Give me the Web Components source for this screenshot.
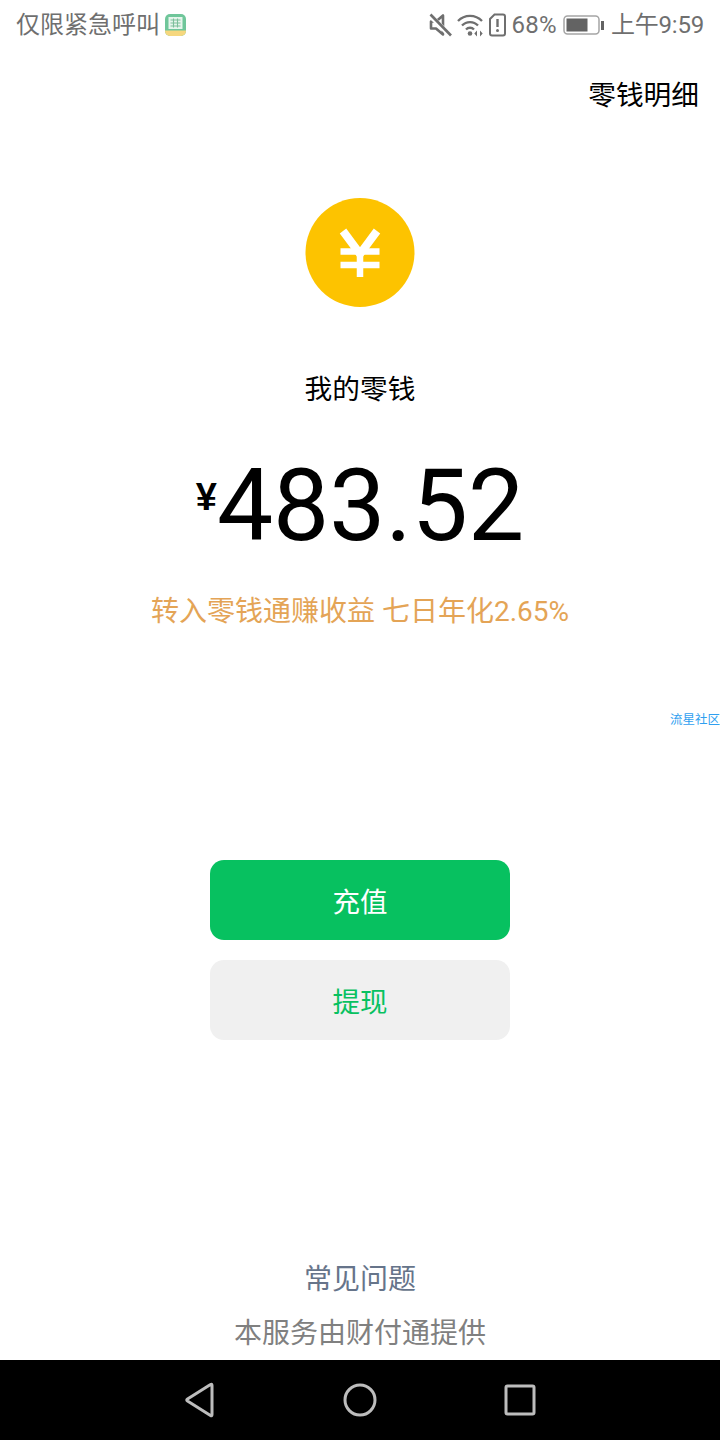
<!DOCTYPE html>
<html lang="zh"><head><meta charset="utf-8">
<style>
html,body{margin:0;padding:0;background:#fff}
body{width:720px;height:1440px;font-family:"Roboto","Noto Sans CJK SC",sans-serif}
</style></head><body>
<wallet-page>
<status-bar></status-bar>
<top-action>零钱明细</top-action>
<balance-panel></balance-panel>
<side-mark>流星社区</side-mark>
<action-button kind="primary">充值</action-button>
<action-button kind="secondary">提现</action-button>
<page-footer></page-footer>
<nav-bar></nav-bar>
</wallet-page>
<script>
const S='"Roboto","Noto Sans CJK SC",sans-serif';
function def(name,html){customElements.define(name,class extends HTMLElement{constructor(){super();this.attachShadow({mode:'open'}).innerHTML=typeof html==='function'?html(this):html;}});}
def('wallet-page',`<style>:host{display:flex;flex-direction:column;width:720px;height:1440px;overflow:hidden}</style><slot></slot>`);
def('status-bar',`<style>:host{display:flex;align-items:center;height:50px;padding:0 16px;box-sizing:border-box;color:#6f6f6f;font:24px/50px ${S}}
.l{display:flex;align-items:center;flex:1}.r{display:flex;align-items:center}
svg{display:block;flex:none}</style>
<div class="l"><span>仅限紧急呼叫</span><svg style="margin-left:5px" width="21" height="22" viewBox="0 0 21 22"><rect x="0" y="0" width="21" height="22" rx="5" fill="#6fc69a"/><rect x="3.500" y="3" width="14" height="12" fill="#e6f5ec"/><path d="M5.500 6h10M5.500 9h10M5.500 12h10M8.500 4.500v9M12.500 4.500v9" stroke="#7cbf9b" stroke-width="1.100"/><path d="M0 16.500h21v.5a5 5 0 0 1-5 5H5a5 5 0 0 1-5-5z" fill="#f6d77e"/></svg></div>
<div class="r">
<svg width="24" height="26" viewBox="0 0 24 26" fill="none"><path d="M2 9.500h5L14 3.500v19L7 16.500H2z" stroke="#6f6f6f" stroke-width="2.600" stroke-linejoin="round"/><path d="M3 5.500l19 19" stroke="#fff" stroke-width="5"/><path d="M1.500 2.500l20.500 21" stroke="#6f6f6f" stroke-width="2.600"/></svg>
<svg style="margin-left:4px" width="28" height="24" viewBox="0 0 28 24" fill="none" stroke="#6f6f6f" stroke-width="2.300"><path d="M1 8a16.500 16.500 0 0 1 24 0M5 12.500a11 11 0 0 1 16 0M9 16.500a5.500 5.500 0 0 1 8 0"/><circle cx="13" cy="20.500" r="2.300" fill="#6f6f6f" stroke="none"/><path d="M20 17.500v6l-2.700-3zM23 17.500v6l2.700-3z" fill="#6f6f6f" stroke="none"/></svg>
<svg style="margin-left:4px" width="17" height="24" viewBox="0 0 17 24" fill="none"><path d="M5.500 1.500H14a2 2 0 0 1 2 2v17a2 2 0 0 1-2 2H3a2 2 0 0 1-2-2V6z" stroke="#6f6f6f" stroke-width="2"/><path d="M8.500 6v8" stroke="#6f6f6f" stroke-width="2.400"/><circle cx="8.500" cy="17.500" r="1.500" fill="#6f6f6f"/></svg>
<span style="margin-left:5px;letter-spacing:.3px">68%</span>
<svg style="margin-left:6px" width="42" height="20" viewBox="0 0 42 20" fill="none"><rect x="1" y="1" width="35" height="18" rx="3.500" stroke="#a5a5a5" stroke-width="1.500"/><rect x="3.500" y="3.500" width="21" height="13" fill="#636363"/><rect x="38" y="6" width="3" height="9" fill="#636363"/></svg>
<span style="margin-left:6px;letter-spacing:-.2px">上午9:59</span>
</div>`);
def('top-action',`<style>:host{display:block;height:90px;box-sizing:border-box;padding:26px 21px 0 0;text-align:right;color:#000;font:27.700px/40px ${S}}</style><slot></slot>`);
def('balance-panel',`<style>:host{display:flex;flex-direction:column;align-items:center;height:490px;padding-top:58px;box-sizing:border-box;font-family:${S}}
.coin{width:110px;height:110px;flex:none}
.t{margin-top:62px;font-size:27.700px;line-height:40px;color:#000}
.a{margin-top:41px;display:flex;align-items:flex-start;color:#000;height:110px;line-height:110px;font-size:100px}
.y{font-size:38px;line-height:38px;font-weight:700;margin:27px 0 0 0;font-family:"Liberation Sans",sans-serif}
.r{margin-top:31px;font-size:28px;line-height:40px;color:#e4a456;white-space:nowrap}</style>
<svg class="coin" viewBox="0 0 110 110"><circle cx="55" cy="54.500" r="54.500" fill="#fdc300"/><path d="M38 33L55 56L72 33" fill="none" stroke="#fff" stroke-width="8"/><path d="M35.500 53.500H74.500M35.500 67H74.500M55 55V79" fill="none" stroke="#fff" stroke-width="6.500"/></svg>
<div class="t">我的零钱</div>
<div class="a"><span class="y">¥</span><span>483.52</span></div>
<div class="r">转入零钱通赚收益 七日年化2.65%</div>`);
def('side-mark',`<style>:host{display:block;height:230px;padding-top:80px;text-align:right;box-sizing:border-box;color:#2f9ff0;font:12.500px/20px ${S};white-space:nowrap}</style><slot></slot>`);
def('action-button',h=>`<style>:host{display:flex;align-items:center;justify-content:center;flex:none;align-self:center;width:300px;height:80px;border-radius:14px;box-sizing:border-box;font:27.500px/1 ${S};margin-bottom:20px;padding-top:5px;
background:${h.getAttribute('kind')==='primary'?'#07c160':'#f0f0f0'};color:${h.getAttribute('kind')==='primary'?'#fff':'#07c160'}}</style><slot></slot>`);
def('page-footer',`<style>:host{display:flex;flex-direction:column;align-items:center;flex:1;justify-content:flex-end;font:28px/1 ${S}}
.a{color:#66748a;line-height:56px}.b{color:#808080;line-height:52px}</style><div class="a">常见问题</div><div class="b">本服务由财付通提供</div>`);
def('nav-bar',`<style>:host{display:block;height:80px;background:#000;flex:none}
svg{display:block}</style>
<svg width="720" height="80" viewBox="0 0 720 80" fill="none" stroke="#bdbdbd" stroke-width="3"><path d="M212 25.500V54.500Q212 56.500 210.500 55.500L187.500 41Q186 40 187.500 39L210.500 24.500Q212 23.500 212 25.500Z" stroke-linejoin="round"/><circle cx="360" cy="40" r="15"/><rect x="506" y="26" width="28" height="28" rx="1.500"/></svg>`);
</script>
</body></html>
